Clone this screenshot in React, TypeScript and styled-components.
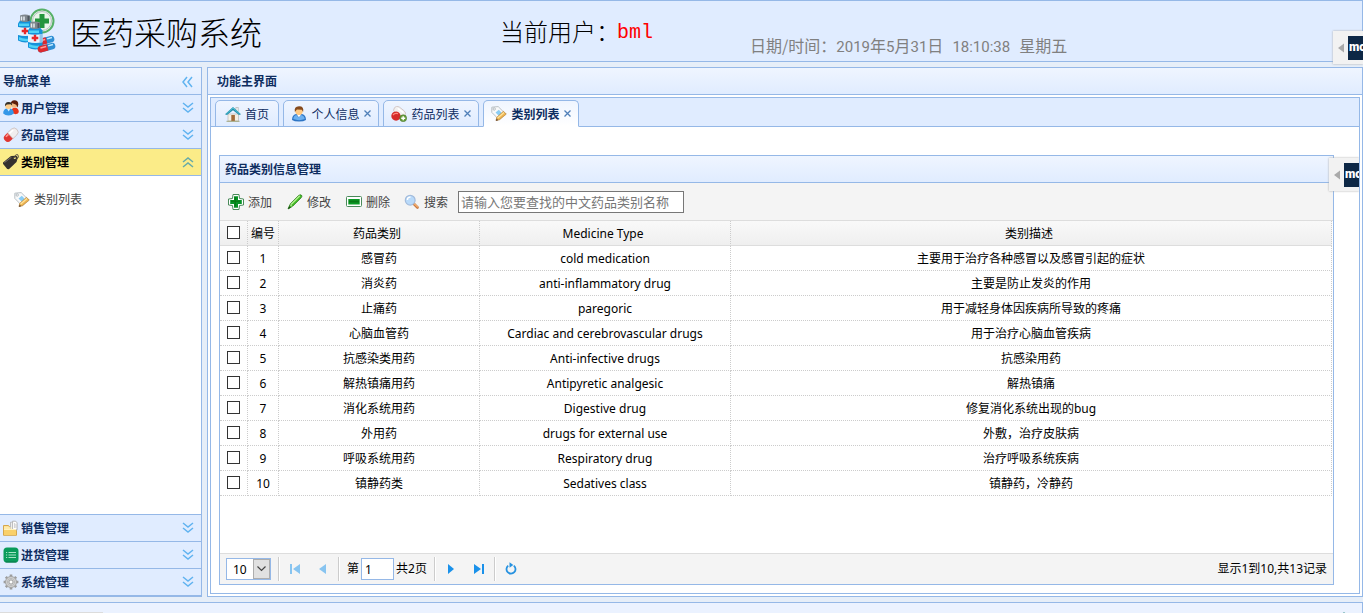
import React from "react";
import styled, { createGlobalStyle } from "styled-components";

const line = "#95b8e7";
const grid = "#cccccc";
const ink = "#0e2d5f";

const GlobalStyle = createGlobalStyle`
  * { box-sizing: border-box; }
  body {
    margin: 0;
    overflow: hidden;
    font-family: "Noto Sans", "Noto Sans CJK SC", sans-serif;
    font-size: 12px;
    line-height: 16px;
    color: #000;
    background: #e6eef8;
  }
  button, input, select { font-family: inherit; font-size: inherit; }
`;

const Page = styled.div`
  display: flex;
  flex-direction: column;
  gap: 5px;
  height: 100vh;
  overflow: hidden;
`;

const Header = styled.header`
  flex: none;
  position: relative;
  display: flex;
  align-items: flex-start;
  height: 62px;
  padding-left: 16px;
  border: 1px solid ${line};
  border-left: 0;
  background: #e0ecff;
`;

const Title = styled.h1`
  margin: 0 0 0 12px;
  padding-top: 7px;
  width: 430px;
  font-family: "Noto Sans CJK SC", sans-serif;
  font-size: 32px;
  line-height: 46px;
  font-weight: 300;
  white-space: nowrap;
`;

const Logo = styled.svg`
  flex: none;
  width: 42px;
  height: 48px;
  margin-top: 6px;
`;

const CurrentUser = styled.div`
  display: flex;
  width: 250px;
  padding-top: 14px;
  font-size: 24px;
  line-height: 32px;
  font-weight: 300;
  white-space: nowrap;
  font-family: "Noto Sans CJK SC", sans-serif;
`;

const UserName = styled.span`
  margin-left: -3px;
  font-family: "Liberation Mono", monospace;
  font-size: 20px;
  line-height: 36px;
  font-weight: normal;
  color: #f00;
`;

const Clock = styled.time`
  display: flex;
  align-items: baseline;
  gap: 9px;
  padding-top: 34px;
  font-family: "Noto Sans CJK SC", sans-serif;
  font-size: 16px;
  line-height: 20px;
  color: #808080;
  white-space: nowrap;
`;

const Digits = styled.span`
  font-family: Roboto, sans-serif;
  font-size: 15px;
`;

const Columns = styled.div`
  flex: 1;
  display: flex;
  gap: 5px;
  min-height: 0;
`;

const Sidebar = styled.nav`
  flex: none;
  display: flex;
  flex-direction: column;
  width: 202px;
  border: 1px solid ${line};
  border-left: 0;
  background: #fff;
`;

const PanelHeader = styled.div`
  flex: none;
  display: flex;
  align-items: center;
  justify-content: space-between;
  height: 27px;
  padding: 2px 8px 0 ${(p: { $indent: number }) => p.$indent}px;
  border-bottom: 1px solid ${line};
  background: linear-gradient(#eff5ff, #e0ecff);
  color: ${ink};
  font-weight: bold;
`;

const IconButton = styled.button`
  display: flex;
  padding: 0;
  border: 0;
  background: none;
`;

const MenuHeader = styled.button<{ $active?: boolean }>`
  flex: none;
  display: flex;
  align-items: center;
  gap: 2px;
  height: 27px;
  padding: 0 7px 0 3px;
  border: 0;
  border-bottom: 1px solid ${line};
  background: ${(p) => (p.$active ? "#fbec88" : "#e0ecff")};
  color: ${(p) => (p.$active ? "#000" : ink)};
  font-weight: bold;
  text-align: left;
`;

const MenuLabel = styled.span`
  flex: 1;
`;

const MenuBody = styled.div`
  flex: 1;
  padding: 16px 14px;
  border-bottom: 1px solid ${line};
`;

const MenuLink = styled.a`
  display: flex;
  align-items: center;
  gap: 4px;
  color: #444;
  text-decoration: none;
`;

const Main = styled.main`
  flex: 1;
  min-width: 0;
  display: flex;
  flex-direction: column;
  border: 1px solid ${line};
  background: #fff;
`;

const TabsPanel = styled.div`
  position: relative;
  flex: 1;
  min-height: 0;
  display: flex;
  flex-direction: column;
  margin: 2px;
  border: 1px solid ${line};
  overflow: hidden;
`;

const TabStrip = styled.div`
  flex: none;
  display: flex;
  gap: 4px;
  height: 29px;
  padding: 2px 4px 0;
  border-bottom: 1px solid ${line};
  background: #e0ecff;
`;

const Tab = styled.div<{ $selected?: boolean; $narrow?: boolean }>`
  display: flex;
  align-items: center;
  justify-content: center;
  width: ${(p) => (p.$narrow ? 64 : 96)}px;
  height: 27px;
  border: 1px solid ${line};
  border-bottom-color: ${(p) => (p.$selected ? "#fff" : line)};
  border-radius: 5px 5px 0 0;
  background: ${(p) => (p.$selected ? "linear-gradient(#eff5ff, #fff)" : "linear-gradient(#eff5ff, #e0ecff)")};
  font-weight: ${(p) => (p.$selected ? "bold" : "normal")};
`;

const TabLabel = styled.button`
  display: flex;
  align-items: center;
  gap: 4px;
  padding: 0;
  border: 0;
  background: none;
  color: ${ink};
  font-weight: inherit;
  white-space: nowrap;
`;

const CloseButton = styled(IconButton)`
  margin-left: 4px;
`;

const TabBody = styled.div`
  flex: 1;
  min-height: 0;
  display: flex;
  padding: 28px 25px 8px 8px;
`;

const DataPanel = styled.section`
  flex: 1;
  min-width: 0;
  display: flex;
  flex-direction: column;
  border: 1px solid ${line};
`;

const Toolbar = styled.div`
  flex: none;
  display: flex;
  align-items: center;
  gap: 15px;
  height: 38px;
  padding: 0 8px;
  border-bottom: 1px solid #ddd;
  background: #f4f4f4;
`;

const ToolButton = styled.button`
  display: flex;
  align-items: center;
  gap: 4px;
  padding: 0;
  border: 0;
  background: none;
  color: #444;
  white-space: nowrap;
`;

const SearchGroup = styled.div`
  display: flex;
  align-items: center;
  gap: 10px;
  margin-left: -1px;
`;

const SearchInput = styled.input`
  width: 226px;
  height: 22px;
  padding: 0 2px;
  border: 1px solid #777;
  border-radius: 0;
  background: #fff;
  font-size: 13px;
  &::placeholder { color: #777; opacity: 1; }
`;

const TableArea = styled.div`
  flex: 1;
  min-height: 0;
  overflow: hidden;
  padding-right: 1px;
`;

const Table = styled.table`
  width: 100%;
  table-layout: fixed;
  border-collapse: separate;
  border-spacing: 0;
`;

const Col = styled.col<{ $width?: number }>`
  width: ${(p) => (p.$width ? `${p.$width}px` : "auto")};
`;

const Th = styled.th<{ $tight?: boolean }>`
  height: 25px;
  padding: ${(p) => (p.$tight ? "2px 0 0" : "2px 4px 0 0")};
  border-right: 1px dotted ${grid};
  border-bottom: 1px solid #ddd;
  background: linear-gradient(#f9f9f9, #efefef);
  font-weight: normal;
  white-space: nowrap;
`;

const Td = styled.td`
  height: 25px;
  padding: 2px 0 0;
  border-right: 1px dotted ${grid};
  border-bottom: 1px dotted ${grid};
  text-align: center;
  white-space: nowrap;
`;

const Check = styled.input`
  appearance: none;
  display: block;
  width: 13px;
  height: 13px;
  margin: 0 7px 4px;
  border: 1px solid #333;
  background: #fff;
`;

const Pager = styled.div`
  flex: none;
  display: flex;
  align-items: center;
  height: 31px;
  padding: 0 6px;
  border-top: 1px solid #ddd;
  background: #f4f4f4;
`;

const SizeSelect = styled.div`
  position: relative;
  width: 45px;
  height: 22px;
  margin-right: 7px;
  select {
    appearance: none;
    width: 100%;
    height: 100%;
    padding: 0 0 0 6px;
    border: 1px solid ${line};
    border-radius: 0;
    background: #fff;
    color: #000;
  }
`;

const SelectArrow = styled.span`
  position: absolute;
  top: 1px;
  right: 1px;
  display: flex;
  align-items: center;
  justify-content: center;
  width: 17px;
  height: 20px;
  border: 1px solid #adadad;
  background: #e1e1e1;
  pointer-events: none;
`;

const Separator = styled.span`
  width: 2px;
  height: 24px;
  border-left: 1px solid #ccc;
  border-right: 1px solid #fff;
`;

const PagerGroup = styled.div<{ $gap: number }>`
  display: flex;
  align-items: center;
  gap: ${(p) => p.$gap}px;
  padding: 0 7px;
`;

const PageInput = styled.input`
  width: 33px;
  height: 22px;
  padding: 0 3px;
  border: 1px solid ${line};
  border-radius: 0;
`;

const RecordCount = styled.span`
  margin-left: auto;
`;

const Footer = styled.footer`
  flex: none;
  position: relative;
  height: 11px;
  padding: 8px 12px 0;
  overflow: hidden;
  border-top: 1px solid ${line};
  border-right: 1px solid ${line};
  background: #ebf2ff;
  display: flex;
  justify-content: flex-end;
`;

const StatusEdge = styled.span`
  position: absolute;
  left: 0;
  bottom: 0;
  width: 103px;
  height: 1px;
  background: #dcdcdc;
`;

const Floating = styled.aside<{ $top: number; $right: number }>`
  position: absolute;
  top: ${(p) => p.$top}px;
  right: ${(p) => p.$right}px;
  z-index: 2;
  display: flex;
  align-items: center;
  gap: 4px;
  width: 30px;
  height: 33px;
  padding-left: 5px;
  overflow: hidden;
  background: #f2f2f2;
  box-shadow: 0 0 2px #aaa;
`;

const Brand = styled.span`
  flex: none;
  width: 24px;
  height: 24px;
  padding-left: 1px;
  background: #0d2745;
  color: #fff;
  font-family: Roboto, sans-serif;
  font-weight: 900;
  font-size: 12px;
  line-height: 22px;
`;

const Glyph = styled.svg`
  flex: none;
  display: block;
`;

type IconName =
  | "users" | "pill" | "tag" | "edit-tag" | "folder" | "list" | "gear"
  | "home" | "person" | "pill-add" | "add" | "pencil" | "remove" | "search";

const shapes: Record<IconName, React.ReactNode> = {
  users: (
    <>
      <path d="M8.500 10.500Q9 7.500 12 7.700q3.800.2 3.800 4.300-.2 2-3.200 2.200L9 13z" fill="#e8331c" />
      <circle cx="11.400" cy="4.400" r="3.400" fill="#f2b880" />
      <path d="M7.600 4Q7.900.2 11.400.2q3.800 0 3.900 4.200l-.7 3-1.400-2.600-3.800-1.600z" fill="#5c1d0c" />
      <path d="M.2 13.400q0-4.200 3.300-5h4q3.200 1 3.300 5-1.900 2-5.300 2t-5.300-2z" fill="#3497e8" />
      <path d="M3.800 8.500h3.600l-1.700 3z" fill="#d8efff" />
      <circle cx="5.400" cy="5.700" r="3.200" fill="#ffce8a" />
      <path d="M2 6.300Q1.600 2 5.500 1.900q4 .1 3.600 3.700L7.600 4.300 3.800 4.600z" fill="#33312c" />
    </>
  ),
  pill: (
    <g transform="rotate(-43 8 8)">
      <path d="M7 4H3.800a4 4 0 0 0 0 8H7z" fill="#e03632" />
      <path d="M7 4h5.200a4 4 0 0 1 0 8H7z" fill="#f1eeee" stroke="#c7b8b4" strokeWidth=".7" />
      <path d="M3 5.800h3.500" stroke="#ff9c93" strokeWidth="1.500" />
      <path d="M8 5.800h5" stroke="#fff" strokeWidth="1.500" />
    </g>
  ),
  tag: (
    <>
      <path d="M0 8.500 8 2l5.500-.2 1.300 1.600-1.300 4.500-7.600 7.300-1.700-.1L.1 10z" fill="#35312e" />
      <path d="m1.500 8.500 7-5.300" stroke="#77706b" />
      <circle cx="11.800" cy="4" r="1.100" fill="#fbec88" />
      <path d="M11.600 4Q12-.3 14.800.700q2 1.900-1.300 5" fill="none" stroke="#5a5145" />
    </>
  ),
  "edit-tag": (
    <>
      <path d="M.8 1.200 7.200.6l7.300 7.300-6.300 6L.8 6.400z" fill="#f8f9fa" stroke="#b9c0c5" />
      <circle cx="3.200" cy="3" r="1.200" fill="#fff" stroke="#9aa4aa" strokeWidth=".7" />
      <path d="m4.500 6.500 3.300-2.800 3.300 3.500-3.200 2.900z" fill="#8bcdf4" />
      <path d="m5 14.500.8-3.200 6.700-6 2.800 2.800-6.800 5.600z" fill="#eeb552" stroke="#b07a2c" strokeWidth=".6" />
      <path d="m6.700 12 6.300-5.400" stroke="#ffe39a" strokeWidth="1.300" />
      <path d="m4.800 15 .7-2.600 1.900 1.900z" fill="#71533b" />
    </>
  ),
  folder: (
    <>
      <path d="M.5 5.500h5l1.500 2h6.500v7.800H.5z" fill="#ffe398" stroke="#d5a74d" />
      <path d="M7.500 2.200h6v8h-6z" fill="#eee" stroke="#aaa" strokeWidth=".7" />
      <path d="M9.600 1.200h3l1.500 1.600v7h-4.500z" fill="#fff" stroke="#aaa" strokeWidth=".8" />
      <path d="M11.700 3v5M13 4v4" stroke="#ccc" />
      <path d="M1 9.300h12v5.700H1z" fill="#f9d06b" />
      <path d="M1 9.500h12M1 8h8" stroke="#fff2be" />
    </>
  ),
  list: (
    <>
      <rect x=".5" y=".5" width="15" height="15" rx="3.500" fill="#099b5b" />
      <path d="M2.500 15h11" stroke="#08754a" />
      <path d="M5.500 5.500h7.500M5.500 8h7.500M5.500 10.500h7.500M3 5.500h1.200M3 8h1.200M3 10.500h1.200" stroke="#a6e4c6" />
    </>
  ),
  gear: (
    <>
      <g stroke="#9c9c9c" strokeWidth="2.600">
        <path d="M8 .6v14.800M.6 8h14.800M2.800 2.800l10.400 10.400M13.200 2.800 2.800 13.200" />
      </g>
      <circle cx="8" cy="8" r="5.500" fill="#d2d2d2" stroke="#a4a4a4" />
      <circle cx="8" cy="8" r="3.500" fill="#e4e4e4" stroke="#b4b4b4" />
      <circle cx="8" cy="8" r="2.100" fill="#fff" stroke="#999" />
    </>
  ),
  home: (
    <>
      <path d="M3 8h10.500v7H3z" fill="#f5f0e4" stroke="#b8b8b8" strokeWidth=".7" />
      <path d="M10.800 1.500h2.500v4h-2.500z" fill="#f0f0f0" stroke="#aaa" strokeWidth=".6" />
      <path d="M0 8.300 8 .9l8 7.400-2 .8L8 4.300 2 9.100z" fill="#238fac" />
      <path d="M1.300 8 8 2l6.700 6" fill="none" stroke="#50c1d3" />
      <path d="M6.300 9h3.600v6H6.300z" fill="#a46b38" />
      <path d="M1.500 15.300h13" stroke="#a0a57d" />
    </>
  ),
  person: (
    <>
      <path d="M1 14q0-5 4-6h6q4 1 4 6-2.300 1.500-7 1.500T1 14z" fill="#2c74c4" />
      <path d="M2.300 13q.3-3.500 3-4l2.500 2.600L10.500 9q3 1 3.200 4-5.500 2.300-11.400 0z" fill="#6bb0f0" />
      <path d="M5.500 8.300h5l-2.600 3z" fill="#fff" />
      <circle cx="8" cy="5.300" r="3.700" fill="#ffc982" />
      <path d="M3.900 6Q2.700.4 8 .3t4.100 5.700l-1.300-2.200-4.900-.4z" fill="#864a1c" />
    </>
  ),
  "pill-add": (
    <>
      <g transform="rotate(38 9 6)">
        <rect x="2" y="2.500" width="13" height="7" rx="3.500" fill="#f2f0f0" stroke="#c9bbb8" strokeWidth=".7" />
        <path d="M5 4.500h7" stroke="#fff" strokeWidth="1.500" />
      </g>
      <path d="M.3 10a4.700 4.700 0 0 1 8.500-2.500l1 2.500a4.700 4.700 0 1 1-9.500 0z" fill="#d52b2b" />
      <path d="M2 9Q4 6.500 7 7.700" stroke="#ff8a7f" strokeWidth="1.300" fill="none" />
      <circle cx="12.200" cy="12.200" r="3.400" fill="#6aa03c" stroke="#47752a" strokeWidth=".6" />
      <path d="M12.200 10.200v4M10.200 12.200h4" stroke="#fff" strokeWidth="1.400" />
    </>
  ),
  add: (
    <>
      <path d="M5 .5h6l.5 4 4 .5v6l-4 .5-.5 4H5l-.5-4-4-.5V5l4-.5z" fill="#fff" stroke="#4a8a5a" />
      <path d="M6 2.200h4V6h3.800v4H10v3.800H6V10H2.200V6H6z" fill="#069326" />
      <path d="M7.200 3v9.500M3 7.200h9" stroke="#08730e" />
    </>
  ),
  pencil: (
    <>
      <path d="m1 15 2.300-5.200L11.800 1.300q2-1.200 3 .3.400 1.100-.7 2.200l-8.500 8.500z" fill="#42bd24" stroke="#29761c" strokeWidth=".8" />
      <path d="m4 10.500 8.800-8.700" stroke="#b6f193" strokeWidth="1.300" />
      <path d="m1 15 1.200-2.800 1.600 1.600z" fill="#174e12" />
      <path d="m3 10.500 2 2" stroke="#e7f7cd" />
    </>
  ),
  remove: (
    <>
      <rect x=".5" y="2.500" width="15" height="10" rx="1" fill="#fff" stroke="#4a8a5a" />
      <path d="M2.300 5h11.400v5.500H2.300z" fill="#0a9a25" />
      <path d="M3 7.500h10" stroke="#087816" strokeWidth="2" />
    </>
  ),
  search: (
    <>
      <path d="m9.500 9.500 4 4" stroke="#c9783f" strokeWidth="2.600" strokeLinecap="round" />
      <path d="m10 9.500 3.500 3.400" stroke="#f3b070" strokeWidth="1.300" strokeLinecap="round" />
      <circle cx="6.200" cy="6.200" r="4.900" fill="#b9dafa" stroke="#a3bcdc" strokeWidth="1.200" />
      <path d="M3.500 6Q3.200 3.200 6.500 2.900" stroke="#fff" strokeWidth="1.500" fill="none" />
    </>
  ),
};

const Icon = ({ name }: { name: IconName }) => (
  <Glyph width="16" height="16" viewBox="0 0 16 16" aria-hidden="true">{shapes[name]}</Glyph>
);

const chevrons = {
  down: "m1 1 5 4 5-4M1 6l5 4 5-4",
  up: "m1 6 5-4 5 4M1 11l5-4 5 4",
  left: "M6 1 2 6l4 5M11 1 7 6l4 5",
};

const Chevrons = ({ dir }: { dir: keyof typeof chevrons }) => (
  <Glyph width="12" height="12" viewBox="0 0 12 12" aria-hidden="true">
    <path d={chevrons[dir]} fill="none" stroke={dir === "up" ? "#66aaa8" : "#60b3f0"} strokeWidth="1.500" />
  </Glyph>
);

const pagerPaths = {
  first: "M3 3h2v10H3zM13 3v10L6 8z",
  prev: "M11 3v10L4 8z",
  next: "M5 3v10l6-5z",
  last: "M3 3v10l7-5zM11 3h2v10h-2z",
};

const PagerIcon = ({ name, dim }: { name: keyof typeof pagerPaths; dim?: boolean }) => (
  <Glyph width="16" height="16" viewBox="0 0 16 16" aria-hidden="true">
    <path d={pagerPaths[name]} fill={dim ? "#87c4f0" : "#1a91ea"} />
  </Glyph>
);

const BrandTab = ({ top, right }: { top: number; right: number }) => (
  <Floating $top={top} $right={right}>
    <Glyph width="6" height="10" viewBox="0 0 6 10" aria-hidden="true"><path d="M6 .5v9L0 5z" fill="#aaa" /></Glyph>
    <Brand>mo</Brand>
  </Floating>
);

const Bottle = ({ x, y }: { x: number; y: number }) => (
  <g transform={`translate(${x} ${y})`}>
    <path d="M2 6.500h10l2.500 3v17q-7 4-14.500 0v-17z" fill="#1592da" />
    <path d="M1 9.500h10v2.500H1zM1 23q5 2.500 10 1.500v2.500q-6 .5-10-1z" fill="#4fd3f7" />
    <path d="M0 13q7 1.500 14.500 0v8q-7.500 2-14.500 0z" fill="#e8f2fc" />
    <path d="M13 13v8.500" stroke="#8fc4ea" strokeWidth="3" />
    <path d="M2 1.500q5-2 10 0v5.500q-5 2-10 0z" fill="#7f878d" />
    <path d="M3.500 2.500v4M6 2.500v4" stroke="#e6edf1" strokeWidth="1.500" />
    <path d="M10.500 2v5" stroke="#4d565d" strokeWidth="2" />
    <path d="M7 13.700v6.600M3.700 17h6.600" stroke="#e8282a" strokeWidth="2.400" />
  </g>
);

const Capsule = ({ x, y }: { x: number; y: number }) => (
  <g transform={`translate(${x} ${y}) rotate(-16)`}>
    <rect width="18" height="6.500" rx="3.200" fill="#2f8fd4" />
    <path d="M10 0H3.200a3.200 3.200 0 0 0 0 6.500H10z" fill="#dc292f" />
    <path d="M3 2h6" stroke="#ff9d99" strokeWidth="1.500" />
    <path d="M11 2h5" stroke="#c4edff" strokeWidth="1.500" />
  </g>
);

const menusBelow: { icon: IconName; label: string }[] = [
  { icon: "folder", label: "销售管理" },
  { icon: "list", label: "进货管理" },
  { icon: "gear", label: "系统管理" },
];

const tabs: { icon: IconName; label: string; fixed?: boolean; selected?: boolean }[] = [
  { icon: "home", label: "首页", fixed: true },
  { icon: "person", label: "个人信息" },
  { icon: "pill-add", label: "药品列表" },
  { icon: "edit-tag", label: "类别列表", selected: true },
];

const rows = [
  ["感冒药", "cold medication", "主要用于治疗各种感冒以及感冒引起的症状"],
  ["消炎药", "anti-inflammatory drug", "主要是防止发炎的作用"],
  ["止痛药", "paregoric", "用于减轻身体因疾病所导致的疼痛"],
  ["心脑血管药", "Cardiac and cerebrovascular drugs", "用于治疗心脑血管疾病"],
  ["抗感染类用药", "Anti-infective drugs", "抗感染用药"],
  ["解热镇痛用药", "Antipyretic analgesic", "解热镇痛"],
  ["消化系统用药", "Digestive drug", "修复消化系统出现的bug"],
  ["外用药", "drugs for external use", "外敷，治疗皮肤病"],
  ["呼吸系统用药", "Respiratory drug", "治疗呼吸系统疾病"],
  ["镇静药类", "Sedatives class", "镇静药，冷静药"],
];

const MenuItem = ({ icon, label, active }: { icon: IconName; label: string; active?: boolean }) => (
  <MenuHeader type="button" $active={active} aria-expanded={!!active}>
    <Icon name={icon} />
    <MenuLabel>{label}</MenuLabel>
    <Chevrons dir={active ? "up" : "down"} />
  </MenuHeader>
);

export default function App() {
  return (
    <>
      <GlobalStyle />
      <Page>
        <Header>
          <Logo viewBox="0 0 42 48" aria-hidden="true">
            <circle cx="26" cy="14" r="11.500" fill="#e8f5e9" stroke="#56b067" strokeWidth="2" />
            <circle cx="26" cy="14" r="9.500" fill="none" stroke="#b6bec0" />
            <path d="M26 7v14M19 14h14" stroke="#23953c" strokeWidth="5" />
            <Bottle x={2} y={7} />
            <Capsule x={20} y={33} />
            <Bottle x={12} y={14} />
            <Capsule x={21} y={40} />
          </Logo>
          <Title>医药采购系统</Title>
          <CurrentUser>当前用户：<UserName>bml</UserName></CurrentUser>
          <Clock dateTime="2019-05-31T18:10:38">
            <span>
              日期/时间：<Digits>2019</Digits>年<Digits>5</Digits>月<Digits>31</Digits>日
            </span>
            <Digits>18:10:38</Digits>
            <span>星期五</span>
          </Clock>
          <BrandTab top={30} right={-1} />
        </Header>

        <Columns>
          <Sidebar>
            <PanelHeader $indent={3}>
              导航菜单
              <IconButton type="button" aria-label="折叠"><Chevrons dir="left" /></IconButton>
            </PanelHeader>
            <MenuItem icon="users" label="用户管理" />
            <MenuItem icon="pill" label="药品管理" />
            <MenuItem icon="tag" label="类别管理" active />
            <MenuBody>
              <MenuLink href="#types"><Icon name="edit-tag" />类别列表</MenuLink>
            </MenuBody>
            {menusBelow.map((m) => <MenuItem key={m.label} {...m} />)}
          </Sidebar>

          <Main>
            <PanelHeader $indent={9}>功能主界面</PanelHeader>
            <TabsPanel>
              <TabStrip>
                {tabs.map((t) => (
                  <Tab key={t.label} $selected={t.selected} $narrow={t.fixed}>
                    <TabLabel type="button"><Icon name={t.icon} />{t.label}</TabLabel>
                    {!t.fixed && (
                      <CloseButton type="button" aria-label="关闭">
                        <Glyph width="7" height="7" viewBox="0 0 7 7"><path d="m.5.5 6 6m0-6-6 6" stroke="#4f7fb8" strokeWidth="1.300" /></Glyph>
                      </CloseButton>
                    )}
                  </Tab>
                ))}
              </TabStrip>
              <TabBody>
                <DataPanel>
                  <PanelHeader $indent={5}>药品类别信息管理</PanelHeader>
                  <Toolbar>
                    <ToolButton type="button"><Icon name="add" />添加</ToolButton>
                    <ToolButton type="button"><Icon name="pencil" />修改</ToolButton>
                    <ToolButton type="button"><Icon name="remove" />删除</ToolButton>
                    <SearchGroup>
                      <ToolButton type="button"><Icon name="search" />搜索</ToolButton>
                      <SearchInput type="text" aria-label="搜索" placeholder="请输入您要查找的中文药品类别名称" />
                    </SearchGroup>
                  </Toolbar>
                  <TableArea>
                    <Table>
                      <colgroup>
                        <Col $width={28} />
                        <Col $width={31} />
                        <Col $width={201} />
                        <Col $width={251} />
                        <Col />
                      </colgroup>
                      <thead>
                        <tr>
                          <Th $tight><Check type="checkbox" aria-label="全选" /></Th>
                          <Th $tight>编号</Th>
                          <Th>药品类别</Th>
                          <Th>Medicine Type</Th>
                          <Th>类别描述</Th>
                        </tr>
                      </thead>
                      <tbody>
                        {rows.map(([name, english, note], i) => (
                          <tr key={name}>
                            <Td><Check type="checkbox" aria-label={name} /></Td>
                            <Td>{i + 1}</Td>
                            <Td>{name}</Td>
                            <Td>{english}</Td>
                            <Td>{note}</Td>
                          </tr>
                        ))}
                      </tbody>
                    </Table>
                  </TableArea>
                  <Pager>
                    <SizeSelect>
                      <select aria-label="每页条数" defaultValue="10">
                        <option>10</option>
                        <option>20</option>
                      </select>
                      <SelectArrow>
                        <Glyph width="9" height="6" viewBox="0 0 9 6"><path d="m.5.5 4 4 4-4" fill="none" stroke="#444" strokeWidth="1.200" /></Glyph>
                      </SelectArrow>
                    </SizeSelect>
                    <Separator />
                    <PagerGroup $gap={12}>
                      <IconButton type="button" aria-label="首页" disabled><PagerIcon name="first" dim /></IconButton>
                      <IconButton type="button" aria-label="上一页" disabled><PagerIcon name="prev" dim /></IconButton>
                    </PagerGroup>
                    <Separator />
                    <PagerGroup $gap={2}>
                      <label htmlFor="page">第</label>
                      <PageInput id="page" type="text" defaultValue="1" />
                      <span>共2页</span>
                    </PagerGroup>
                    <Separator />
                    <PagerGroup $gap={12}>
                      <IconButton type="button" aria-label="下一页"><PagerIcon name="next" /></IconButton>
                      <IconButton type="button" aria-label="末页"><PagerIcon name="last" /></IconButton>
                    </PagerGroup>
                    <Separator />
                    <PagerGroup $gap={0}>
                      <IconButton type="button" aria-label="刷新">
                        <Glyph width="16" height="16" viewBox="0 0 16 16">
                          <path d="M5.200 4.600A4.500 4.500 0 1 0 10.800 4.600" fill="none" stroke="#2792e0" strokeWidth="1.800" />
                          <path d="M6.500 1.200 10.300 4 6.500 6.700z" fill="#2792e0" />
                        </Glyph>
                      </IconButton>
                    </PagerGroup>
                    <RecordCount>显示1到10,共13记录</RecordCount>
                  </Pager>
                </DataPanel>
              </TabBody>
              <BrandTab top={60} right={0} />
            </TabsPanel>
          </Main>
        </Columns>

        <Footer>
          <Chevrons dir="up" />
          <StatusEdge />
        </Footer>
      </Page>
    </>
  );
}
